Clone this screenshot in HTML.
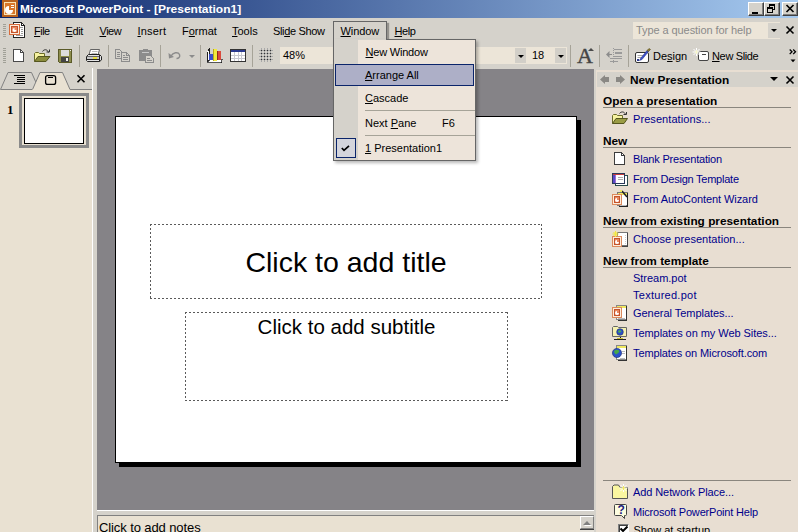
<!DOCTYPE html>
<html><head><meta charset="utf-8"><title>Microsoft PowerPoint - [Presentation1]</title>
<style>
html,body{margin:0;padding:0}
body{width:798px;height:532px;overflow:hidden;position:relative;background:#d5d2cb;font:11px "Liberation Sans",sans-serif;color:#000}
.a{position:absolute}
.t{position:absolute;white-space:nowrap;line-height:13px;font:11px/13px "Liberation Sans",sans-serif}
.b{font-weight:bold;transform-origin:0 50%;transform:scaleX(1.075)}
.l{color:#00008b}
u{text-decoration:underline;text-underline-offset:1px}
.sep{position:absolute;width:1px;background:#a6a398;top:45px;height:22px}
.bx{position:absolute;background:#ece5d8}
.hr{position:absolute;height:1px;background:#8a867e;left:603px;width:188px}
svg{position:absolute;overflow:visible}
.wb{position:absolute;top:2px;width:16px;height:14px;background:#d5d2cb;box-sizing:border-box;border:1px solid;border-color:#fff #404040 #404040 #fff;box-shadow:inset -1px -1px 0 #808080}
.grip{position:absolute;width:3px;background:repeating-linear-gradient(180deg,#a0a097 0 1px,transparent 1px 2px)}
.arr{position:absolute;width:0;height:0;border:3px solid transparent;border-top-color:#000;border-bottom:none;border-left-width:3px;border-right-width:3px}
.ph{background:repeating-linear-gradient(90deg,#5a5a5a 0 2px,transparent 2px 4px) 0 0/100% 1px no-repeat,repeating-linear-gradient(90deg,#5a5a5a 0 2px,transparent 2px 4px) 0 100%/100% 1px no-repeat,repeating-linear-gradient(180deg,#5a5a5a 0 2px,transparent 2px 4px) 0 0/1px 100% no-repeat,repeating-linear-gradient(180deg,#5a5a5a 0 2px,transparent 2px 4px) 100% 0/1px 100% no-repeat}
.wb i{position:absolute;background:#000;display:block}

</style></head><body>

<!-- title bar -->
<div class="a" id="title" style="left:0;top:0;width:798px;height:18px;background:linear-gradient(90deg,#0a246a 0%,#a6caf0 100%)"></div>
<div class="t b" style="left:20px;top:3px;color:#fff;transform:scaleX(1.09)">Microsoft PowerPoint - [Presentation1]</div>


<!-- title icon -->
<svg style="left:2px;top:0" width="16" height="17" shape-rendering="crispEdges">
<rect x="0" y="0" width="16" height="17" fill="#b9631f"/>
<rect x="2.5" y="2.5" width="11" height="12" fill="#d9772a" stroke="#fbe3b4" stroke-width="1"/>
<path d="M8 5 L8 9 L12 9 A4 4 0 1 1 8 5Z" fill="#fff" shape-rendering="auto" transform="translate(-1,1)"/>
<rect x="9" y="5" width="3" height="1" fill="#fff"/><rect x="9" y="7" width="3" height="1" fill="#fff"/>
</svg>
<!-- window buttons -->
<div class="wb" style="left:748px"><i style="left:3px;top:9px;width:6px;height:2px"></i></div>
<div class="wb" style="left:764px"><i style="left:4px;top:1px;width:6px;height:2px"></i><i style="left:4px;top:1px;width:1px;height:3px"></i><i style="left:9px;top:1px;width:1px;height:6px"></i><i style="left:8px;top:6px;width:2px;height:1px"></i><i style="left:2px;top:4px;width:6px;height:2px"></i><i style="left:2px;top:4px;width:1px;height:6px"></i><i style="left:7px;top:4px;width:1px;height:6px"></i><i style="left:2px;top:9px;width:6px;height:1px"></i></div>
<div class="wb" style="left:782px"><svg style="left:3px;top:2px" width="8" height="7"><path d="M0.5 0 L7.5 7 M7.5 0 L0.5 7" stroke="#000" stroke-width="1.7"/></svg></div>

<!-- menubar -->
<div class="a" style="left:0;top:18px;width:798px;height:25px;background:#d5d2cb"></div>

<!-- menubar grip + doc icon -->
<div class="grip" style="left:3px;top:24px;height:14px"></div>
<svg style="left:9px;top:22px" width="17" height="17" shape-rendering="crispEdges">
<path d="M4.500 0.500 H12.500 L15.500 3.500 V15.500 H4.500Z" fill="#fff" stroke="#222" stroke-width="1"/>
<path d="M12.500 0.500 V3.500 H15.500" fill="none" stroke="#222"/>
<path d="M11 5.500 H14 M12 7.500 H14 M12 9.500 H14 M12 11.500 H14 M7 13.500 H14" stroke="#999"/>
<rect x="0.5" y="2.5" width="10" height="10" fill="#fcecdc" stroke="#d86c3c"/>
<rect x="2.5" y="4.5" width="6" height="6" fill="#e88860" stroke="#c4542c"/>
<path d="M5.500 6 V8 H7.500 A2 2 0 1 1 5.500 6Z" fill="#fff" shape-rendering="auto"/>
</svg>
<!-- Window menu button (open) -->
<div class="a" style="left:333px;top:21px;width:54px;height:19px;box-sizing:border-box;border:1px solid #666;border-bottom:none;background:#d5d2cb;box-shadow:2px 2px 1px rgba(0,0,0,.3)"></div>
<!-- help box -->
<div class="bx" style="left:633px;top:22px;width:147px;height:17px"></div>
<div class="a" style="left:768px;top:23px;width:12px;height:15px;background:#d5d2cb"></div>
<div class="t" style="left:636px;top:24px;color:#8a8a8a;letter-spacing:-0.080px">Type a question for help</div>
<div class="arr" style="left:771px;top:29px"></div>
<svg style="left:786px;top:26px" width="8" height="8"><path d="M0.5 0.5 L7.5 7.5 M7.5 0.5 L0.5 7.5" stroke="#000" stroke-width="1.6"/></svg>
<div class="t" style="left:34px;top:25px;letter-spacing:-0.500px"><u>F</u>ile</div>
<div class="t" style="left:65.500px;top:25px;letter-spacing:-0.400px"><u>E</u>dit</div>
<div class="t" style="left:99.500px;top:25px;letter-spacing:-0.500px"><u>V</u>iew</div>
<div class="t" style="left:137.500px;top:25px;letter-spacing:0.200px"><u>I</u>nsert</div>
<div class="t" style="left:182px;top:25px">F<u>o</u>rmat</div>
<div class="t" style="left:232px;top:25px"><u>T</u>ools</div>
<div class="t" style="left:273px;top:25px;letter-spacing:-0.350px">Sli<u>d</u>e Show</div>
<div class="t" style="left:340.500px;top:25px;letter-spacing:-0.100px"><u>W</u>indow</div>
<div class="t" style="left:394.500px;top:25px;letter-spacing:-0.400px"><u>H</u>elp</div>

<!-- toolbar -->
<div class="a" style="left:0;top:43px;width:798px;height:25px;background:#d5d2cb"></div>


<div class="grip" style="left:3px;top:48px;height:16px"></div>
<!-- new -->
<svg style="left:13px;top:49px" width="12" height="13" shape-rendering="crispEdges"><path d="M0.5 0.5 H7.5 L10.5 3.5 V12.5 H0.5Z" fill="#fff" stroke="#4a4a4a"/><path d="M7.5 0.5 V3.5 H10.5" fill="none" stroke="#4a4a4a"/></svg>
<!-- open -->
<svg style="left:34px;top:48px" width="17" height="15"><path d="M0.5 13.5 V5.5 L1.5 4.5 H4.5 L5.5 5.5 H10.5 V8.5" fill="#f6f2a0" stroke="#6b6b2a"/><path d="M0.5 13.5 L4 8.5 H16 L12 13.5Z" fill="#8b8c3c" stroke="#55561e"/><path d="M8.5 3.5 C10 1 13.5 1 14.5 4.5" fill="none" stroke="#333"/><path d="M12.5 4 H15.5 V1.5" fill="none" stroke="#333"/></svg>
<!-- save -->
<svg style="left:58px;top:49px" width="15" height="14" shape-rendering="crispEdges"><path d="M0.5 0.5 H13.5 V13.5 H1.5 L0.5 12.5Z" fill="#8d8d4d" stroke="#5a5a28"/><rect x="3" y="1" width="8" height="6" fill="#dcdcde"/><rect x="3" y="8" width="8" height="5" fill="#444"/><rect x="8" y="9" width="2" height="3" fill="#eee"/><rect x="12" y="1" width="1" height="1" fill="#eee"/></svg>
<div class="sep" style="left:79px"></div>
<!-- print -->
<svg style="left:86px;top:48px" width="17" height="15"><path d="M4.500 1.500 H13.500 L12 7 H3Z" fill="#fff" stroke="#555" stroke-width=".9"/><path d="M6 3.500 H11.500 M5.500 5.500 H11" stroke="#aaa" stroke-width=".8"/><path d="M2.500 6.500 H13.500 L15.500 8.500 V12 L13.500 13.500 H1.500 L0.500 12.500 V8.500Z" fill="#e4e4e4" stroke="#222"/><path d="M1 11.500 H13.500" stroke="#222"/><path d="M1 8.500 H13.500" stroke="#666"/><rect x="1" y="9" width="12.500" height="2" fill="#c8c8c8"/><rect x="7" y="9" width="4" height="2" fill="#e8e040"/><path d="M13.500 7 V13.500" stroke="#222"/></svg>
<div class="sep" style="left:108px"></div>
<!-- copy (disabled) -->
<svg style="left:115px;top:49px" width="16" height="14" shape-rendering="crispEdges"><path d="M0.500 0.500 H4.500 L6.500 2.500 V9.500 H0.500Z" fill="#d5d2cb" stroke="#8c8c8c"/><path d="M2 3.500 H5 M2 5.500 H5 M2 7.500 H5" stroke="#8c8c8c"/><path d="M6.500 3.500 H11.500 L14.500 6.500 V12.500 H6.500Z" fill="#d5d2cb" stroke="#8c8c8c"/><path d="M11.500 3.500 V6.500 H14.500" fill="none" stroke="#8c8c8c"/><path d="M8 6.500 H10 M8 8.500 H13 M8 10.500 H13" stroke="#8c8c8c"/></svg>
<!-- paste (disabled) -->
<svg style="left:138px;top:49px" width="16" height="14" shape-rendering="crispEdges"><path d="M1 1 H14 V12 H1Z" fill="#8c8c8c"/><rect x="5" y="0" width="5" height="2" fill="#8c8c8c"/><rect x="4" y="3" width="7" height="1" fill="#c8c8c8"/><path d="M7.500 6.500 H12.500 L15.500 9.500 V13.500 H7.500Z" fill="#d5d2cb" stroke="#8c8c8c"/><path d="M9 9.500 H12 M9 11.500 H14" stroke="#8c8c8c"/></svg>
<div class="sep" style="left:160px"></div>
<!-- undo (disabled) -->
<svg style="left:168px;top:51px" width="14" height="9"><path d="M3 5 C5 1.500 10 0.500 11.500 3.500 C12.500 6 10.500 7.500 8.500 7.500" fill="none" stroke="#8c8c8c" stroke-width="1.400"/><path d="M0.500 2 L1 7.500 L6 6Z" fill="#8c8c8c"/></svg>
<div class="arr" style="left:189px;top:55px;border-top-color:#8c8c8c"></div>
<div class="sep" style="left:200px"></div>
<!-- chart -->
<svg style="left:207px;top:48px" width="16" height="16" shape-rendering="crispEdges"><path d="M0.500 3 V14.500 H15 " fill="none" stroke="#222"/><path d="M0.500 3.500 L2.500 0.500 V11.500 L0.500 14.500" fill="#fff" stroke="#222"/><path d="M1 14 L3 11.500 H15.500 L14 14Z" fill="#fff" stroke="#555"/><rect x="2" y="6" width="4" height="6" fill="#3b4ecb"/><rect x="6" y="1" width="4" height="12" fill="#f2ea3c"/><rect x="6" y="1" width="1" height="12" fill="#b8a81c"/><rect x="10" y="3" width="4" height="9" fill="#da4a3c"/><rect x="10" y="3" width="1" height="9" fill="#8e2a20"/></svg>
<!-- table -->
<svg style="left:230px;top:49px" width="17" height="13" shape-rendering="crispEdges"><rect x="0.500" y="0.500" width="15" height="12" fill="#fff" stroke="#333"/><rect x="1" y="1" width="14" height="2" fill="#2b3a90"/><path d="M1 6.500 H15 M1 9.500 H15 M4.500 3 V12 M8.500 3 V12 M11.500 3 V12" stroke="#c8c8d0"/></svg>
<div class="sep" style="left:252px"></div>
<!-- grid -->
<svg style="left:259px;top:48px" width="14" height="14" shape-rendering="crispEdges"><path d="M0 2.500 H14 M0 5.500 H14 M0 8.500 H14 M0 11.500 H14 M2.500 0 V14 M5.500 0 V14 M8.500 0 V14 M11.500 0 V14" stroke="#a8a8a8"/><g fill="#333"><rect x="2" y="2" width="1" height="1"/><rect x="5" y="2" width="1" height="1"/><rect x="8" y="2" width="1" height="1"/><rect x="11" y="2" width="1" height="1"/><rect x="2" y="5" width="1" height="1"/><rect x="5" y="5" width="1" height="1"/><rect x="8" y="5" width="1" height="1"/><rect x="11" y="5" width="1" height="1"/><rect x="2" y="8" width="1" height="1"/><rect x="5" y="8" width="1" height="1"/><rect x="8" y="8" width="1" height="1"/><rect x="11" y="8" width="1" height="1"/><rect x="2" y="11" width="1" height="1"/><rect x="5" y="11" width="1" height="1"/><rect x="8" y="11" width="1" height="1"/><rect x="11" y="11" width="1" height="1"/></g></svg>
<!-- zoom box -->
<div class="bx" style="left:280px;top:47px;width:60px;height:17px"></div>
<div class="t" style="left:283px;top:49px">48%</div>
<!-- font combo -->
<div class="bx" style="left:355px;top:47px;width:212px;height:17px"></div>
<div class="a" style="left:515px;top:48px;width:11px;height:15px;background:#d2cfc8"></div>
<div class="arr" style="left:518px;top:55px"></div>
<div class="t" style="left:532px;top:49px">18</div>
<div class="a" style="left:555px;top:48px;width:11px;height:15px;background:#d2cfc8"></div>
<div class="arr" style="left:558px;top:55px"></div>
<div class="sep" style="left:570px"></div>
<!-- A grow -->
<div class="t" style="left:577px;top:46px;font:21px/20px 'Liberation Serif',serif;color:#444;-webkit-text-stroke:0.400px #444;transform:scaleX(1.05);transform-origin:0 0">A</div>
<div class="arr" style="left:588px;top:48px;border-top:none;border-bottom:3px solid #4a4a4a"></div>
<div class="sep" style="left:599px"></div>
<!-- indent (disabled) -->
<svg style="left:606px;top:48px" width="17" height="15" shape-rendering="crispEdges"><path d="M8 1.500 H16 M9 4.500 H16 M9 5.500 H16 M8 8.500 H16 M4 10.500 H16 M4 13.500 H12" stroke="#9a9a9a"/><path d="M7.500 0 V15" stroke="#9a9a9a" stroke-dasharray="1 1"/><path d="M2 6.500 H6" stroke="#8c8c8c"/><path d="M0 6.500 L3.500 3 V10Z" fill="#8c8c8c" shape-rendering="auto"/></svg>
<div class="sep" style="left:628px"></div>
<!-- design -->
<svg style="left:635px;top:48px" width="17" height="15"><rect x="0.500" y="4.500" width="13" height="10" rx="1.500" fill="#fff" stroke="#333"/><path d="M2.500 7.500 H9 M2.500 9.500 H7" stroke="#aaa"/><rect x="2" y="11" width="2" height="2" fill="#2b3a90"/><path d="M4.500 12.500 L7 11.500 L13.500 3.500 L12 2.500 L5.500 10.500Z" fill="#3b4ecb" stroke="#2b3a90" stroke-width=".6"/><path d="M12 2.500 L14 0.500 L15.500 1.500 L13.500 3.500Z" fill="#8b7a30" stroke="#554a1c" stroke-width=".6"/></svg>
<div class="t" style="left:653px;top:50px">De<u>s</u>ign</div>
<!-- new slide -->
<svg style="left:692px;top:47px" width="18" height="15"><rect x="6.500" y="4.500" width="10" height="9" rx="1.500" fill="#fff" stroke="#444"/><path d="M10 7.500 H14" stroke="#444"/><path d="M4.500 1 V9 M0.500 5 H8.500 M1.500 2 L7.500 8 M7.500 2 L1.500 8" stroke="#fff" stroke-width="1"/><path d="M4.500 3 V7 M2.500 5 H6.500" stroke="#f4f4c8"/></svg>
<div class="t" style="left:712px;top:50px;letter-spacing:-0.350px"><u>N</u>ew Slide</div>
<!-- chevrons -->
<svg style="left:789px;top:49px" width="8" height="14"><path d="M0.700 0.500 L3 2.800 L0.700 5.100 M4.200 0.500 L6.500 2.800 L4.200 5.100" fill="none" stroke="#000" stroke-width="1.300"/><path d="M1.500 10.500 H6.500 L4 13.200Z" fill="#000"/></svg>

<!-- left pane -->
<div class="a" style="left:0;top:89px;width:92px;height:443px;background:#e9e1d2"></div>
<div class="a" style="left:92px;top:68px;width:1px;height:464px;background:#fff"></div>
<svg style="left:0;top:68px" width="93" height="23">
<path d="M32 21.500 H0.500 L8 4.500 H31.500 L36 14.500" fill="none" stroke="#808080"/>
<path d="M70 21.500 H92" stroke="#808080"/>
<path d="M32.500 21.500 L40 4.500 H62.500 L70 21.500" fill="#e9e1d2" stroke="#808080"/>
<g shape-rendering="crispEdges"><path d="M14 7.500 H25 M17 9.500 H25 M17 11.500 H25 M17 13.500 H25 M14 15.500 H25" stroke="#000"/></g>
<rect x="45.600" y="7.600" width="10" height="8.800" rx="2" fill="none" stroke="#000" stroke-width="1.300"/>
<path d="M48 9.500 H53" stroke="#000" stroke-width="1"/>
<path d="M77.500 7.300 L84.500 14.300 M84.500 7.300 L77.500 14.300" stroke="#000" stroke-width="1.600"/>
</svg>
<div class="a" style="left:19px;top:93px;width:70px;height:55px;box-sizing:border-box;border:3px solid #8a8a8a"></div>
<div class="a" style="left:24px;top:98px;width:60px;height:46px;box-sizing:border-box;border:1px solid #000;background:#fff"></div>
<div class="t" style="left:7px;top:102px;font:bold 13px/16px 'Liberation Serif',serif">1</div>
<!-- workspace -->
<div class="a" style="left:97px;top:69px;width:497px;height:441px;background:#858387"></div>
<div class="a" style="left:97px;top:510px;width:497px;height:1px;background:#fff"></div>
<!-- slide -->
<div class="a" style="left:119px;top:120px;width:462px;height:347px;background:#000"></div>
<div class="a" style="left:115px;top:116px;width:462px;height:347px;background:#fff;border:1px solid #000;box-sizing:border-box"></div>
<div class="a ph" style="left:150px;top:224px;width:392px;height:75px"></div>
<div class="a ph" style="left:185px;top:312px;width:323px;height:89px"></div>
<div class="t" style="left:150px;top:245px;width:392px;text-align:center;font:28.500px/34px 'Liberation Sans',sans-serif">Click to add title</div>
<div class="t" style="left:185px;top:315px;width:323px;text-align:center;font:20.500px/24px 'Liberation Sans',sans-serif">Click to add subtitle</div>

<!-- notes -->
<div class="a" style="left:97px;top:515px;width:497px;height:17px;background:#e9e1d2;border-top:1px solid #808080;border-left:1px solid #808080;box-sizing:border-box"></div>
<div class="a" style="left:580px;top:516px;width:14px;height:16px;background:#e6e2da"></div>
<div class="a" style="left:580px;top:516px;width:14px;height:13px;background:#d5d2cb;box-sizing:border-box;border:1px solid;border-color:#fff #808080 #808080 #fff"></div>
<div class="arr" style="left:584px;top:522px;border-width:0 4px 4px 4px;border-top:none;border-bottom:4px solid #fff"></div><div class="arr" style="left:583px;top:521px;border-width:0 4px 4px 4px;border-top:none;border-bottom:4px solid #808080"></div>
<div class="a" style="left:580px;top:529px;width:14px;height:1px;background:#404040"></div>
<div class="t" style="left:99px;top:520px;font-size:13px;line-height:16px;letter-spacing:-0.100px">Click to add notes</div>

<!-- task pane -->
<div class="a" style="left:596px;top:70px;width:202px;height:462px;background:#e8ded2"></div>
<div class="a" style="left:597px;top:72px;width:201px;height:15px;background:#d5d2cb"></div>
<div class="t b" style="left:630px;top:74px">New Presentation</div>

<div class="t b" style="left:603px;top:95px">Open a presentation</div><div class="hr" style="top:107px"></div>
<div class="t l" style="left:633px;top:113px;letter-spacing:0.073px">Presentations...</div>
<div class="t b" style="left:603px;top:135px">New</div><div class="hr" style="top:147px"></div>
<div class="t l" style="left:633px;top:153px;letter-spacing:-0.186px">Blank Presentation</div>
<div class="t l" style="left:633px;top:173px;letter-spacing:-0.233px">From Design Template</div>
<div class="t l" style="left:633px;top:193px;letter-spacing:-0.077px">From AutoContent Wizard</div>
<div class="t b" style="left:603px;top:215px">New from existing presentation</div><div class="hr" style="top:227px"></div>
<div class="t l" style="left:633px;top:233px;letter-spacing:0.051px">Choose presentation...</div>
<div class="t b" style="left:603px;top:255px">New from template</div><div class="hr" style="top:267px"></div>
<div class="t l" style="left:633px;top:272px;letter-spacing:-0.021px">Stream.pot</div>
<div class="t l" style="left:633px;top:289px;letter-spacing:0.271px">Textured.pot</div>
<div class="t l" style="left:633px;top:307px;letter-spacing:-0.035px">General Templates...</div>
<div class="t l" style="left:633px;top:327px;letter-spacing:-0.058px">Templates on my Web Sites...</div>
<div class="t l" style="left:633px;top:347px;letter-spacing:-0.109px">Templates on Microsoft.com</div>
<div class="hr" style="top:480px"></div>
<div class="t l" style="left:633px;top:486px;letter-spacing:-0.091px">Add Network Place...</div>
<div class="t l" style="left:633px;top:506px;letter-spacing:-0.188px">Microsoft PowerPoint Help</div>
<div class="t" style="left:633.500px;top:524px;letter-spacing:0.018px">Show at startup</div>


<!-- header arrows -->
<svg style="left:600px;top:75px" width="26" height="10"><path d="M0 4.500 L5 0 V2 H9 V7 H5 V9Z" fill="#8a8884"/><path d="M25 4.500 L20 0 V2 H16 V7 H20 V9Z" fill="#8a8884"/></svg>
<div class="arr" style="left:770px;top:77px;border-width:4px 4px 0 4px"></div>
<svg style="left:786px;top:76px" width="8" height="8"><path d="M0.500 0.500 L7.500 7.500 M7.500 0.500 L0.500 7.500" stroke="#000" stroke-width="1.600"/></svg>
<!-- open folder -->
<svg style="left:612px;top:111px" width="17" height="14"><path d="M0.500 12.500 V4.500 L1.500 3.500 H4.500 L5.500 4.500 H10.500 V7.500" fill="#f6f2a0" stroke="#6b6b2a"/><path d="M0.500 12.500 L4 7.500 H15.500 L12 12.500Z" fill="#9a9c44" stroke="#55561e"/><path d="M7.500 2.500 C9 0.300 12.500 0.300 13.500 3.500" fill="none" stroke="#333"/><path d="M11.500 3.500 H14.500 V1" fill="none" stroke="#333"/></svg>
<!-- blank -->
<svg style="left:614px;top:152px" width="12" height="13" shape-rendering="crispEdges"><path d="M0.500 0.500 H7.500 L10.500 3.500 V12.500 H0.500Z" fill="#fff" stroke="#3c3c3c"/><path d="M7.500 0.500 V3.500 H10.500" fill="none" stroke="#3c3c3c"/></svg>
<!-- design template -->
<svg style="left:612px;top:173px" width="16" height="13" shape-rendering="crispEdges"><rect x="3.500" y="2.500" width="12" height="10" rx="1" fill="#fff" stroke="#2a4a4a"/><rect x="0.500" y="0.500" width="12" height="10" rx="1" fill="#fff" stroke="#2a3a5a"/><rect x="1" y="1" width="11" height="1" fill="#c83c3c"/><rect x="1" y="2" width="3" height="8" fill="#5a4ac8"/><rect x="3" y="2" width="1" height="8" fill="#a070d0"/><path d="M6 4.500 H11 M6 6.500 H11" stroke="#aaa"/></svg>
<!-- autocontent wizard -->
<svg style="left:612px;top:190px" width="17" height="17" shape-rendering="crispEdges"><rect x="5.500" y="2.500" width="10" height="13" fill="#fff" stroke="#777"/><rect x="6" y="3" width="9" height="2" fill="#f0e860"/><path d="M15.500 3 V16.500 H7" fill="none" stroke="#222"/><path d="M8 15.500 H14" stroke="#bbb"/><rect x="0.5" y="4.5" width="9" height="10" fill="#fcecdc" stroke="#dc8a5c"/><rect x="2.5" y="6.5" width="5" height="6" fill="#e88860" stroke="#c4542c"/><path d="M5.0 8.0 V10.0 H7.0 A2 2 0 1 1 5.0 8.0Z" fill="#fff" shape-rendering="auto"/><path d="M10 1 L15 7" stroke="#222" stroke-width="1.500" shape-rendering="auto"/><rect x="8" y="0" width="2" height="2" fill="#f0e860"/></svg>
<!-- choose presentation -->
<svg style="left:612px;top:231px" width="17" height="16" shape-rendering="crispEdges"><rect x="5.500" y="1.500" width="10" height="13" fill="#fff" stroke="#777"/><path d="M15.500 2 V15.500 H7" fill="none" stroke="#444"/><path d="M13.500 4 V13" stroke="#ccc" stroke-dasharray="1 1"/><rect x="0.5" y="5.5" width="9" height="10" fill="#fcecdc" stroke="#dc8a5c"/><rect x="2.5" y="7.5" width="5" height="6" fill="#e88860" stroke="#c4542c"/><path d="M5.0 9.0 V11.0 H7.0 A2 2 0 1 1 5.0 9.0Z" fill="#fff" shape-rendering="auto"/><path d="M3.500 0 V6 M0.500 3 H6.500 M1.500 1 L5.500 5 M5.500 1 L1.500 5" stroke="#f4e840" shape-rendering="auto"/></svg>
<!-- general templates -->
<svg style="left:612px;top:305px" width="16" height="16" shape-rendering="crispEdges"><rect x="4.500" y="0.500" width="10" height="14" fill="#fff" stroke="#888"/><rect x="5" y="1" width="9" height="2" fill="#f0e860"/><path d="M14.500 1 V15.500 H6" fill="none" stroke="#333"/><path d="M6 13.500 H13" stroke="#bbb"/><rect x="0.5" y="2.5" width="9" height="10" fill="#fcecdc" stroke="#dc8a5c"/><rect x="2.5" y="4.5" width="5" height="6" fill="#e88860" stroke="#c4542c"/><path d="M5.0 6.0 V8.0 H7.0 A2 2 0 1 1 5.0 6.0Z" fill="#fff" shape-rendering="auto"/></svg>
<!-- web sites -->
<svg style="left:612px;top:325px" width="17" height="16"><path d="M0.500 11.500 V2.500 L1.500 1.500 H5.500 L6.500 2.500 H14.500 V11.500Z" fill="#f4f0b0" stroke="#666"/><circle cx="8" cy="7" r="3.300" fill="#2a50c8" stroke="#1a2a70" stroke-width=".6"/><path d="M6 6 Q8 4.500 9.500 6.500 Q8 8 6.500 7.500Z" fill="#50b050"/><path d="M8 11.500 V14.500 M2 14.500 H14" stroke="#222" shape-rendering="crispEdges"/><path d="M5 13.500 H11" stroke="#c8c030" shape-rendering="crispEdges"/></svg>
<!-- microsoft.com -->
<svg style="left:612px;top:345px" width="16" height="16"><g shape-rendering="crispEdges"><rect x="4.500" y="0.500" width="10" height="14" fill="#fff" stroke="#888"/><rect x="5" y="1" width="9" height="2" fill="#f0e860"/><path d="M14.500 1 V15.500 H6" fill="none" stroke="#333"/><path d="M10 6.500 H13 M10 8.500 H13 M8 13.500 H13" stroke="#bbb"/></g><circle cx="5" cy="8" r="4.600" fill="#2a50c8" stroke="#1a2a70" stroke-width=".6"/><path d="M2 6 Q5 3.500 7.500 6 Q6.500 9 4 9.500 Q2 8.500 2 6Z" fill="#48a848"/></svg>
<!-- add network place -->
<svg style="left:612px;top:484px" width="17" height="15"><path d="M0.500 14.500 V2.500 L2 1 H6.500 L8 3.500 H15.500 V14.500Z" fill="#faf6a0" stroke="#555"/><path d="M11.500 0 V8 M7.500 4 H15.500 M8.500 1 L14.500 7 M14.500 1 L8.500 7" stroke="#fff" stroke-width="1"/><path d="M11.500 2 V6 M9.500 4 H13.500" stroke="#f0e860"/></svg>
<!-- help -->
<svg style="left:614px;top:504px" width="14" height="16"><path d="M1.500 0.500 H11.500 Q12.500 0.500 12.500 1.500 V10.500 Q12.500 11.500 11.500 11.500 H10.500 V14.500 L7.500 11.500 H1.500 Q0.500 11.500 0.500 10.500 V1.500 Q0.500 0.500 1.500 0.500Z" fill="#fdfde0" stroke="#444"/></svg>
<div class="t" style="left:617.500px;top:504px;font:bold 12px/13px 'Liberation Sans',sans-serif;color:#1a1a80">?</div>
<!-- checkbox -->
<div class="a" style="left:618px;top:524px;width:11px;height:11px;background:#fff;border:1px solid;border-color:#808080 #fff #fff #808080;box-shadow:inset 1px 1px 0 #404040;box-sizing:border-box"></div>
<svg style="left:620px;top:526px" width="8" height="8"><path d="M0.500 2.500 L3 5 L7.500 0.500" stroke="#000" stroke-width="2" fill="none"/></svg>
<!-- dropdown menu -->
<div class="a" id="menu" style="left:333px;top:39px;width:143px;height:122px;background:#ede4da;border:1px solid #666;box-sizing:border-box;box-shadow:2px 2px 3px rgba(0,0,0,.28)"></div>
<div class="a" style="left:334px;top:40px;width:24px;height:120px;background:#d5d2cb"></div>
<div class="a" style="left:335px;top:64px;width:139px;height:22px;background:#adafc7;border:1px solid #0a246a;box-sizing:border-box"></div>
<div class="a" style="left:334px;top:39px;width:52px;height:1px;background:#d5d2cb"></div>
<div class="a" style="left:365px;top:110px;width:110px;height:1px;background:#a6a398"></div>
<div class="a" style="left:365px;top:135px;width:110px;height:1px;background:#a6a398"></div>
<div class="a" style="left:336px;top:138px;width:20px;height:20px;box-sizing:border-box;border:1px solid #0a246a;background:#d4d5dc"></div>
<svg style="left:341px;top:145px" width="9" height="7"><path d="M0.800 3 L3 5.300 L8 0.800" stroke="#000" stroke-width="1.700" fill="none"/></svg>
<div class="t" style="left:365.500px;top:46px;letter-spacing:-0.200px"><u>N</u>ew Window</div>
<div class="t" style="left:365px;top:69px"><u>A</u>rrange All</div>
<div class="t" style="left:365px;top:92px"><u>C</u>ascade</div>
<div class="t" style="left:365px;top:117px">Next <u>P</u>ane</div>
<div class="t" style="left:442px;top:117px">F6</div>
<div class="t" style="left:365px;top:142px"><u>1</u> Presentation1</div>

</body></html>
